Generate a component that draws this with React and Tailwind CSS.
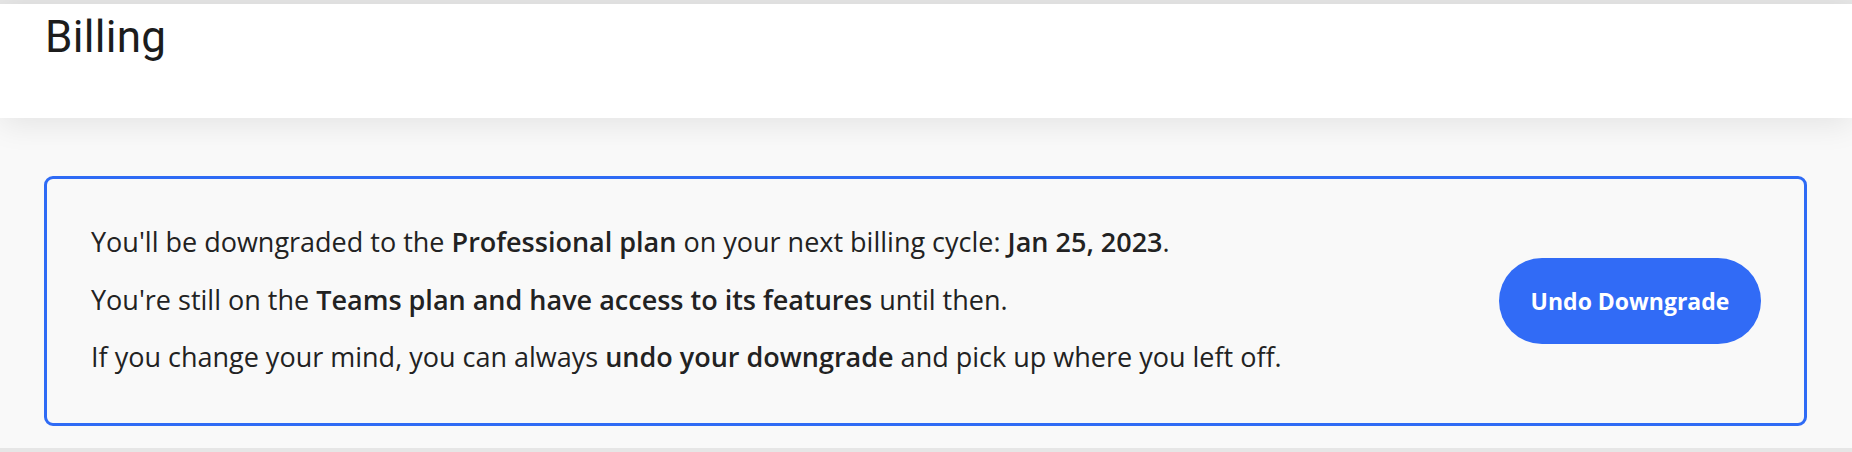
import React from "react";

export default function App() {
  return (
    <div className="h-[452px] w-full bg-[#e6e6e6] pt-[4px] pb-[4px] flex flex-col" style={{ fontFamily: "'Open Sans', Lato, sans-serif" }}>
      {/* Page header */}
      <header className="relative z-10 h-[114px] bg-white shadow-[0_6px_30px_rgba(0,0,0,0.09)] pl-[45px] pt-[7px]">
        <h1 className="text-[44px] leading-[52px] text-[#1c1c1c] font-normal tracking-[0.3px]" style={{ fontFamily: "Roboto, sans-serif" }}>
          Billing
        </h1>
      </header>

      <main className="flex-1 bg-[#f9f9f9] pt-[58px] pl-[44px] pr-[45px]">
        <div className="h-[250px] rounded-[9px] border-[3px] border-[#2f6bf5] flex items-center justify-between pl-[44px] pr-[43px]">
          <div className="text-[27px] leading-[57.5px] text-[#222] pb-[3px]">
            <p>
              You'll be downgraded to the <strong className="font-semibold">Professional plan</strong> on your next billing cycle:{" "}
              <strong className="font-semibold">Jan 25, 2023</strong>.
            </p>
            <p>
              You're still on the <strong className="font-semibold">Teams plan and have access to its features</strong> until then.
            </p>
            <p>
              If you change your mind, you can always <strong className="font-semibold">undo your downgrade</strong> and pick up where you left off.
            </p>
          </div>
          <button className="w-[262px] h-[86px] rounded-full bg-[#316bf6] text-white text-[23px] font-bold">
            Undo Downgrade
          </button>
        </div>
      </main>
    </div>
  );
}
